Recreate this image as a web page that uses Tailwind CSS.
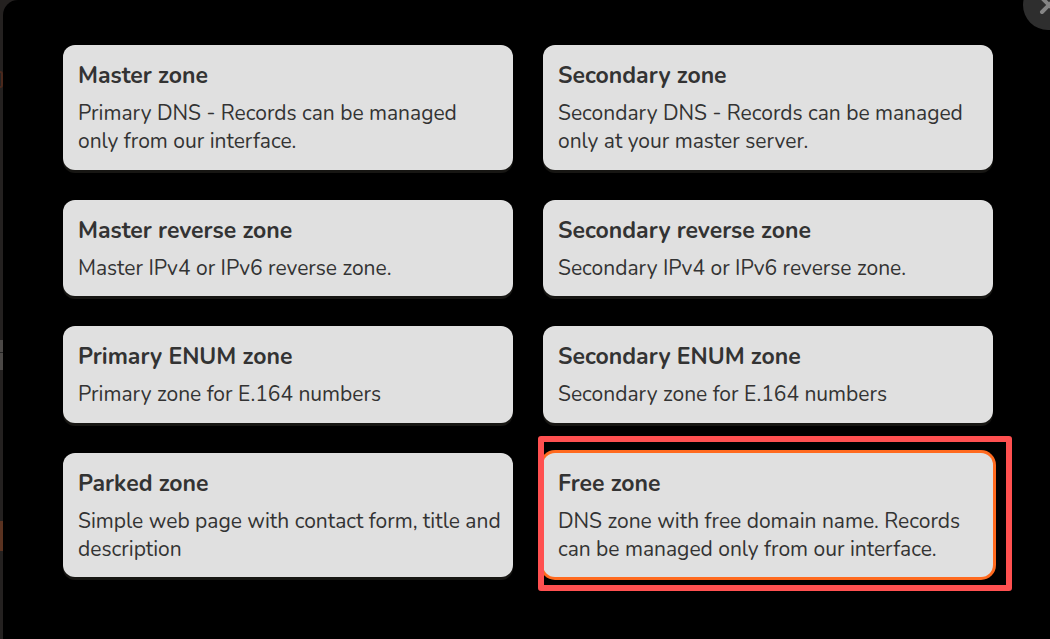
<!DOCTYPE html>
<html lang="en">
<head>
<meta charset="utf-8">
<meta name="viewport" content="width=device-width, initial-scale=1">
<title>Add zone</title>
<script src="https://cdn.jsdelivr.net/npm/@tailwindcss/browser@4"></script>
</head>
<body class="flex min-h-screen overflow-hidden bg-[#242120] font-['Nunito','Lato',sans-serif] text-[#333]">
<div class="flex w-[3px] shrink-0 flex-col" aria-hidden="true">
  <div class="mt-[71px] h-[17px] rounded-r-full border-2 border-l-0 border-[#4a281c]"></div>
  <div class="mt-[252px] h-[30px] bg-[#4b4846] pt-3"><div class="h-px bg-[#222]"></div></div>
  <div class="mt-[151px] h-[30px] bg-[#5a3220]"></div>
</div>
<main role="dialog" aria-label="Choose zone type" class="relative min-h-screen flex-1 rounded-tl-[15px] bg-black pt-[45px] pr-[57px] pb-[62px] pl-[60px]">
  <button aria-label="Close" class="absolute -top-5 right-[-23px] flex size-[50px] items-center justify-center rounded-full bg-[#2e2e2e]">
    <svg class="size-[50px]" viewBox="0 0 50 50" fill="none" stroke="#858585" stroke-width="4" stroke-linecap="round"><path d="M19 32L33 18M19 18L33 32"/></svg>
  </button>
  <div class="grid grid-cols-2 grid-rows-[minmax(125px,auto)_minmax(96px,auto)_minmax(97px,auto)_minmax(124px,auto)] gap-[30px]">
    <button class="flex flex-col gap-[7px] rounded-[12px] bg-[#e0e0e0] pt-[15px] pr-3 pb-[14px] pl-[15px] text-left shadow-[0_3px_0_#171613]">
      <span class="text-[23px] leading-8 font-bold">Master zone</span>
      <span class="text-[21px] leading-7">Primary DNS - Records can be managed only from our interface.</span>
    </button>
    <button class="flex flex-col gap-[7px] rounded-[12px] bg-[#e0e0e0] pt-[15px] pr-3 pb-[14px] pl-[15px] text-left shadow-[0_3px_0_#171613]">
      <span class="text-[23px] leading-8 font-bold">Secondary zone</span>
      <span class="text-[21px] leading-7">Secondary DNS - Records can be managed only at your master server.</span>
    </button>
    <button class="flex flex-col gap-[7px] rounded-[12px] bg-[#e0e0e0] pt-[15px] pr-3 pb-[14px] pl-[15px] text-left shadow-[0_3px_0_#171613]">
      <span class="text-[23px] leading-8 font-bold">Master reverse zone</span>
      <span class="text-[21px] leading-7">Master IPv4 or IPv6 reverse zone.</span>
    </button>
    <button class="flex flex-col gap-[7px] rounded-[12px] bg-[#e0e0e0] pt-[15px] pr-3 pb-[14px] pl-[15px] text-left shadow-[0_3px_0_#171613]">
      <span class="text-[23px] leading-8 font-bold">Secondary reverse zone</span>
      <span class="text-[21px] leading-7">Secondary IPv4 or IPv6 reverse zone.</span>
    </button>
    <button class="flex flex-col gap-[7px] rounded-[12px] bg-[#e0e0e0] pt-[15px] pr-3 pb-[14px] pl-[15px] text-left shadow-[0_3px_0_#171613]">
      <span class="text-[23px] leading-8 font-bold">Primary ENUM zone</span>
      <span class="text-[21px] leading-7">Primary zone for E.164 numbers</span>
    </button>
    <button class="flex flex-col gap-[7px] rounded-[12px] bg-[#e0e0e0] pt-[15px] pr-3 pb-[14px] pl-[15px] text-left shadow-[0_3px_0_#171613]">
      <span class="text-[23px] leading-8 font-bold">Secondary ENUM zone</span>
      <span class="text-[21px] leading-7">Secondary zone for E.164 numbers</span>
    </button>
    <button class="flex flex-col gap-[7px] rounded-[12px] bg-[#e0e0e0] pt-[15px] pr-3 pb-[14px] pl-[15px] text-left shadow-[0_3px_0_#171613]">
      <span class="text-[23px] leading-8 font-bold">Parked zone</span>
      <span class="text-[21px] leading-7">Simple web page with contact form, title and description</span>
    </button>
    <button class="relative flex flex-col gap-[7px] rounded-[12px] bg-[#e0e0e0] pt-[15px] pr-3 pb-[14px] pl-[15px] text-left shadow-[0_0_0_3px_#ff6a1f]">
      <span class="text-[23px] leading-8 font-bold">Free zone</span>
      <span class="text-[21px] leading-7">DNS zone with free domain name. Records can be managed only from our interface.</span>
      <span aria-hidden="true" class="pointer-events-none absolute -top-[17px] -right-[19px] -bottom-[14px] -left-[5px] rounded-[3px] border-6 border-[#ff5050]"></span>
    </button>
  </div>
</main>
</body>
</html>
